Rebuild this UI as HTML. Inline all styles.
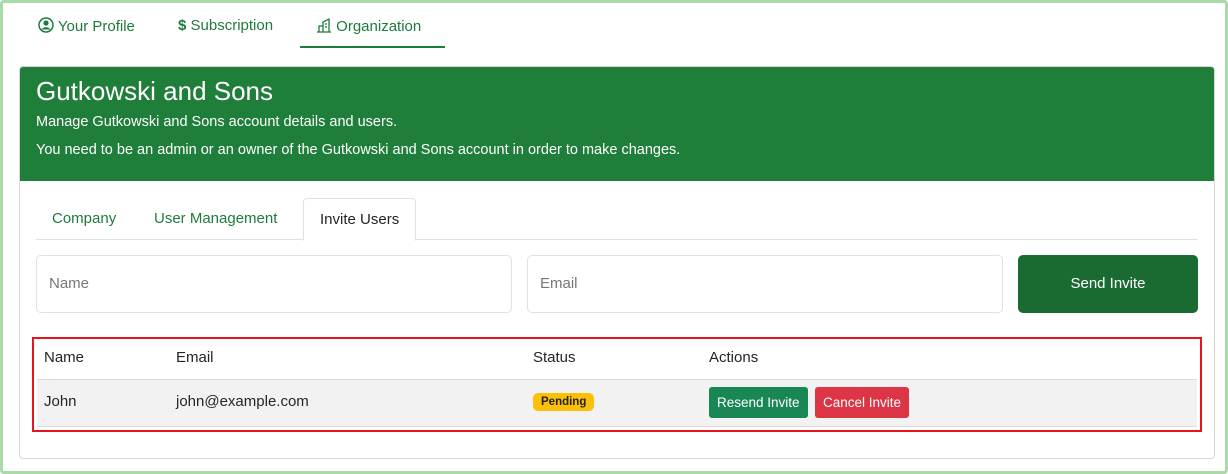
<!DOCTYPE html>
<html><head><style>
*{box-sizing:border-box;margin:0;padding:0}
body{width:1228px;height:474px;background:#fff;font-family:"Liberation Sans",sans-serif;position:relative;overflow:hidden;color:#212529}
.frame{position:absolute;left:0;top:0;width:1228px;height:474px;border:3px solid #a8dba8;border-radius:4px}
.nav{position:absolute;top:17px;font-size:15px;color:#1e7b3c;line-height:18px}
.ul{position:absolute;left:300px;top:46px;width:145px;height:2px;background:#1e7b3c}
.card{position:absolute;left:19px;top:66px;width:1196px;height:393px;border:1px solid #d8d8d8;border-radius:4px;overflow:hidden}
.hdr{background:#1e7e3a;color:#fff;height:114px;padding:9px 16px}
.hdr h1{font-size:26px;font-weight:normal;margin-bottom:2px;line-height:30px}
.hdr p{font-size:14.5px;line-height:28px}
.tabs{position:absolute;left:16px;top:131px;width:1162px;height:42px;border-bottom:1px solid #dee2e6}
.tab{position:absolute;top:0;height:42px;line-height:42px;font-size:15px;color:#1e7b3c;padding:0 16px}
.tab.act{border:1px solid #dee2e6;border-bottom-color:#fff;background:#fff;color:#212529;border-radius:4px 4px 0 0;height:43px}
.inp{position:absolute;top:188px;height:58px;border:1px solid #dee2e6;border-radius:5px;font-size:15px;color:#777;line-height:56px;padding-left:12px}
.btn{position:absolute;left:998px;top:188px;width:180px;height:58px;background:#1a6b32;color:#fff;border-radius:5px;font-size:15px;text-align:center;line-height:58px}
.tbl{position:absolute;left:32px;top:337px;width:1170px;height:95px;border:2px solid #e8141c}
.th{position:absolute;top:10px;font-size:15px}
.row{position:absolute;left:3px;top:40px;width:1160px;height:48px;background:#f2f2f2;border-top:1px solid #ddd;border-bottom:1px solid #ddd}
.td{position:absolute;top:13px;font-size:15px}
.badge{position:absolute;left:496px;top:13px;background:#fcc107;border-radius:5px;font-size:11.5px;font-weight:bold;padding:3px 8px;color:#222}
.b{position:absolute;top:7px;height:31px;line-height:31px;color:#fff;font-size:13.5px;padding:0 8px;border-radius:3px}
</style></head><body>
<div class="frame"></div>
<div class="nav" style="left:38px"><svg width="16" height="16" viewBox="0 0 16 16" style="vertical-align:-2px"><circle cx="8" cy="8" r="7" fill="none" stroke="#1e7b3c" stroke-width="1.5"/><circle cx="8" cy="6" r="2.6" fill="#1e7b3c"/><path d="M3.5 12.5a5 4 0 0 1 9 0" fill="#1e7b3c"/></svg> Your Profile</div>
<div class="nav" style="left:178px"><b>$</b> Subscription</div>
<div class="nav" style="left:316px"><svg width="16" height="16" viewBox="0 0 16 16" style="vertical-align:-2px" fill="none" stroke="#1e7b3c" stroke-width="1.3"><path d="M1 15h14M3 15V9h4v6M7 15V5l6-3v13M9 7h2M9 10h2"/></svg> Organization</div>
<div class="ul"></div>
<div class="card">
<div class="hdr"><h1>Gutkowski and Sons</h1><p>Manage Gutkowski and Sons account details and users.</p><p>You need to be an admin or an owner of the Gutkowski and Sons account in order to make changes.</p></div>
<div class="tabs">
<div class="tab" style="left:0">Company</div>
<div class="tab" style="left:102px">User Management</div>
<div class="tab act" style="left:267px">Invite Users</div>
</div>
<div class="inp" style="left:16px;width:476px">Name</div>
<div class="inp" style="left:507px;width:476px">Email</div>
<div class="btn">Send Invite</div>
</div>
<div class="tbl">
<div class="th" style="left:10px">Name</div>
<div class="th" style="left:142px">Email</div>
<div class="th" style="left:499px">Status</div>
<div class="th" style="left:675px">Actions</div>
<div class="row">
<div class="td" style="left:7px">John</div>
<div class="td" style="left:139px">john@example.com</div>
<div class="badge">Pending</div>
<div class="b" style="left:672px;background:#198754">Resend Invite</div>
<div class="b" style="left:778px;background:#dc3545">Cancel Invite</div>
</div>
</div>
</body></html>
